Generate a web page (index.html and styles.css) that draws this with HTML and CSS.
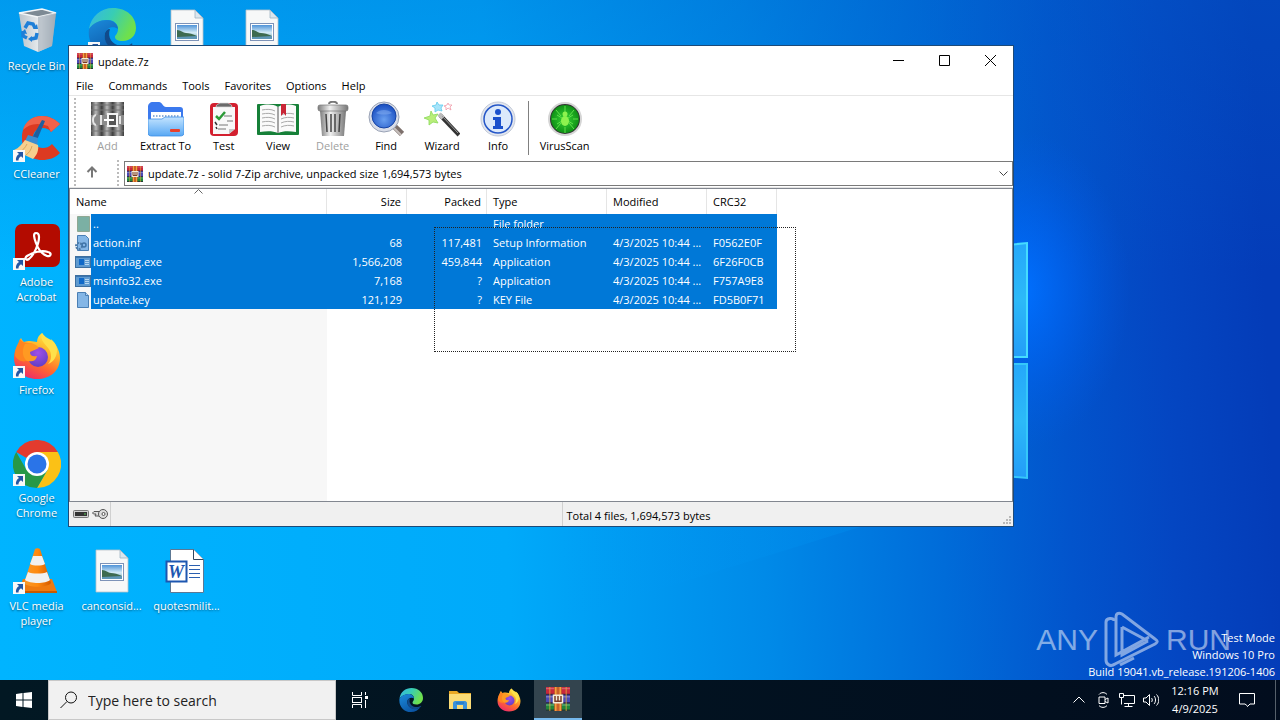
FILE: index.html
```html
<!DOCTYPE html>
<html lang="en">
<head>
    <meta charset="UTF-8">
    <meta name="viewport" content="width=device-width, initial-scale=1.0">
    <title>update.7z</title>
    <link rel="stylesheet" href="styles.css">
</head>
<body>
    <!-- Shared icons -->
    <svg class="sprite" aria-hidden="true">
        <defs>
            <linearGradient id="edgeTop" x1="0" y1="0" x2="1" y2="0.4">
                <stop offset="0" stop-color="#35b6e8"/><stop offset="0.5" stop-color="#38cdb4"/><stop offset="1" stop-color="#6fe04c"/>
            </linearGradient>
            <linearGradient id="edgeBottom" x1="0" y1="0" x2="0.6" y2="1">
                <stop offset="0" stop-color="#1b8bdc"/><stop offset="1" stop-color="#0b55a4"/>
            </linearGradient>
            <linearGradient id="foxBody" x1="0.8" y1="0" x2="0.3" y2="1">
                <stop offset="0" stop-color="#fff14a"/><stop offset="0.35" stop-color="#ffb52a"/><stop offset="0.65" stop-color="#ff6b2e"/><stop offset="1" stop-color="#ee2a6a"/>
            </linearGradient>
            <radialGradient id="foxGlobe" cx="0.5" cy="0.3" r="0.8">
                <stop offset="0" stop-color="#a050e8"/><stop offset="1" stop-color="#5a3cc0"/>
            </radialGradient>
            <linearGradient id="photoSky" x1="0" y1="0" x2="0" y2="1">
                <stop offset="0" stop-color="#4f93d8"/><stop offset="0.55" stop-color="#d5ecf6"/><stop offset="1" stop-color="#6fa6b8"/>
            </linearGradient>
            <linearGradient id="greyBook" x1="0" y1="0" x2="1" y2="0">
                <stop offset="0" stop-color="#444"/><stop offset="0.45" stop-color="#b8b8b8"/><stop offset="1" stop-color="#3a3a3a"/>
            </linearGradient>
            <linearGradient id="folderBlue" x1="0" y1="0" x2="0" y2="1">
                <stop offset="0" stop-color="#c4e4ff"/><stop offset="1" stop-color="#58a8f4"/>
            </linearGradient>
            <linearGradient id="binSide" x1="0" y1="0" x2="1" y2="0">
                <stop offset="0" stop-color="#b9c3cb"/><stop offset="0.6" stop-color="#eceff1"/><stop offset="1" stop-color="#8e9aa4"/>
            </linearGradient>
            <linearGradient id="steel" x1="0" y1="0" x2="1" y2="0">
                <stop offset="0" stop-color="#7d7d7d"/><stop offset="0.4" stop-color="#f0f0f0"/><stop offset="1" stop-color="#777"/>
            </linearGradient>
            <radialGradient id="lens" cx="0.5" cy="0.65" r="0.6">
                <stop offset="0" stop-color="#6aa0f0"/><stop offset="1" stop-color="#1d52c4"/>
            </radialGradient>
            <radialGradient id="radar" cx="0.5" cy="0.5" r="0.55">
                <stop offset="0" stop-color="#36d436"/><stop offset="1" stop-color="#0b8a12"/>
            </radialGradient>
            <linearGradient id="cone" x1="0" y1="0" x2="1" y2="0">
                <stop offset="0" stop-color="#f79a2c"/><stop offset="0.5" stop-color="#ff8a10"/><stop offset="1" stop-color="#d35a00"/>
            </linearGradient>
        </defs>

        <symbol id="shortcut" viewBox="0 0 12 12">
            <rect width="12" height="12" fill="#f8f8f8"/>
            <path d="M4 2h6v6L8 6.200C6 7.500 5.500 8.500 5.500 10.500H3C2.500 8 3.500 5.500 6 4z" fill="#2457a4"/>
        </symbol>

        <symbol id="edge" viewBox="0 0 48 48">
            <path d="M1 21C3 8 13 0 25 0c14 0 23 9 23 20 0 8-6 13-13 13-6 0-8-2-8-4 0-2 3-3 3-8 0-5-4-9-10-9C11 12 4 17 1 21z" fill="url(#edgeTop)"/>
            <path d="M1 21C5 15 12 12 19 12c6 0 11 4 11 9-4-3-11-2-13 4-2 7 3 14 10 16 6 2 12 0 16-3-4 6-11 10-19 10C9 48-1 36 1 21z" fill="url(#edgeBottom)"/>
            <path d="M17 25c-2 8 3 15 11 17 6 1 12-1 16-5 1-1 0-2-1-1-3 2-7 2-10 2-9-1-14-9-11-17-3 0-4 2-5 4z" fill="#114a8b"/>
        </symbol>

        <symbol id="firefox" viewBox="0 0 48 48">
            <path d="M29 1c2 4 5 6 9 10 1-2 0-3 0-4 5 5 9 12 9 19 0 13-10 21-23 21S1 38 1 26c0-6 2-11 5-15 0-2 1-4 2-5 1 2 2 3 3 4 2-1 4-1 6-1l7 1C24 6 26 3 29 1z" fill="url(#foxBody)"/>
            <path d="M7 7c2 3 5 4 9 4 3 0 6 2 8 5l-8 3c-1 3 2 6 6 6l-5 3c-5 1-9 4-15-4 0-7 2-10 5-17z" fill="#ff8420"/>
            <circle cx="25" cy="25" r="10" fill="url(#foxGlobe)"/>
            <path d="M12 12c6-2 11 0 14 4l-9 4c0 4 3 5 7 4-1 5-5 6-10 5-4-3-6-10-2-17z" fill="#ff9a22"/>
            <path d="M29 1c-3 8 5 12 8 18 2 5 1 10-2 13 6-2 9-8 9-14 0-4-3-9-6-10C34 6 31 4 29 1z" fill="#ffe04a"/>
        </symbol>

        <symbol id="rar" viewBox="0 0 16 16">
            <rect width="16" height="5" y="0" fill="#c8283c"/>
            <rect width="16" height="6" y="5" fill="#4a4ab4"/>
            <rect width="16" height="5" y="11" fill="#21863a"/>
            <path d="M0 1h16M0 6.500h16M0 12h16" stroke="#fff" stroke-opacity="0.25"/>
            <path d="M0 5h16M0 10.500h16M0 15.500h16" stroke="#2b1c35" stroke-opacity="0.7"/>
            <path d="M2.500 0v16M13.500 0v16" stroke="#e8b13a" stroke-opacity="0.5"/>
            <rect x="5.500" width="5" height="16" fill="#c8602a"/>
            <path d="M6.500 0v16M9.500 0v16" stroke="#f3a33c"/>
            <rect x="4.500" y="5" width="7" height="6" fill="#f4ecd8"/>
            <path d="M6 6v3.500h4V6M8 6v3" fill="none" stroke="#793b27"/>
        </symbol>

        <symbol id="photo" viewBox="0 0 48 48">
            <path d="M8 2h24l8 8v34H8z" fill="#f7f8f8" stroke="#b9c2c8" stroke-width="0.800"/>
            <path d="M32 2v8h8z" fill="#dbe6ee" stroke="#9fb3c2" stroke-width="0.800"/>
            <rect x="12.500" y="15.500" width="23" height="17" fill="#fff" stroke="#7d93b8"/>
            <rect x="14" y="17" width="20" height="14" fill="url(#photoSky)"/>
            <path d="M14 22c4 0 6 3 9 3s7 1 11 3v1H14z" fill="#3e6b50"/>
            <path d="M14 29l20-1v3H14z" fill="#5f97b6"/>
        </symbol>

        <symbol id="exe" viewBox="0 0 16 16">
            <rect x="0.500" y="2.500" width="15" height="11" fill="#5e9ad0" stroke="#3d6f9f"/>
            <path d="M1 3.500h14" stroke="#3a75b0"/>
            <rect x="4" y="5" width="5" height="6" fill="#1069c8"/>
            <path d="M10 6.500h4M10 8.500h4M10 10.500h4" stroke="#b5d7f2"/>
        </symbol>
    </svg>

    <main class="desktop">
        <!-- Wallpaper -->
        <svg class="wallpaper" viewBox="0 0 1280 680" preserveAspectRatio="none" aria-hidden="true">
            <defs>
                <linearGradient id="sky" x1="0" y1="680" x2="1280" y2="620" gradientUnits="userSpaceOnUse">
                    <stop offset="0" stop-color="#00b4ff"/><stop offset="0.4" stop-color="#00aafa"/>
                    <stop offset="0.6" stop-color="#008ae8"/><stop offset="0.74" stop-color="#006cd9"/>
                    <stop offset="0.84" stop-color="#0254cc"/><stop offset="0.92" stop-color="#0446c2"/>
                    <stop offset="1" stop-color="#043cb8"/>
                </linearGradient>
                <linearGradient id="topShade" x1="0" y1="0" x2="0" y2="1">
                    <stop offset="0" stop-color="#0060c8" stop-opacity="0.3"/><stop offset="0.4" stop-color="#0060c8" stop-opacity="0"/>
                </linearGradient>
                <radialGradient id="glow">
                    <stop offset="0" stop-color="#0070ff"/><stop offset="0.5" stop-color="#0066f8" stop-opacity="0.5"/><stop offset="1" stop-color="#005ce8" stop-opacity="0"/>
                </radialGradient>
                <linearGradient id="pane" x1="0" y1="0" x2="0" y2="1">
                    <stop offset="0" stop-color="#25a8fa"/><stop offset="0.5" stop-color="#2cb9f8"/><stop offset="1" stop-color="#239cf8"/>
                </linearGradient>
                <linearGradient id="beam" x1="0" y1="0" x2="1" y2="0">
                    <stop offset="0" stop-color="#0098f5" stop-opacity="0"/><stop offset="1" stop-color="#0098f5" stop-opacity="0.25"/>
                </linearGradient>
            </defs>
            <rect width="1280" height="680" fill="url(#sky)"/>
            <rect width="1280" height="680" fill="url(#topShade)"/>
            <path d="M560 620L860 527H560z" fill="url(#beam)"/>
            <ellipse cx="1020" cy="290" rx="110" ry="160" fill="url(#glow)"/>
            <path d="M900 256l127-13v114H900z" fill="url(#pane)" stroke="#45dcff" stroke-width="2"/>
            <path d="M900 364h127v114l-127-12z" fill="url(#pane)" stroke="#35c8fa" stroke-width="2"/>
        </svg>

        <!-- Desktop icons -->
        <div class="icon-row">
            <a class="desktop-icon" href="#recycle-bin">
                <svg viewBox="0 0 48 48">
                    <path d="M6 5l23-4 14 4-4 33-14 6-14-6z" fill="url(#binSide)"/>
                    <path d="M6 5l19 4 18-4-14-4z" fill="#7d8a94" stroke="#f3f6f8" stroke-width="1.500"/>
                    <path d="M25 9v35l14-6 4-33z" fill="#a9b4bd" opacity="0.7"/>
                    <path d="M12 20l3-5 5 1 2 4M24 25l-1 5-5 1M14 30l-4-2v-5" fill="none" stroke="#1e7fd8" stroke-width="3.500"/>
                    <path d="M20 21l5 0-1-5zM19 28v6l-4-3zM8 25l4-4 2 5z" fill="#1e7fd8"/>
                </svg>
                <span>Recycle Bin</span>
            </a>
            <a class="desktop-icon" href="#edge" aria-label="Edge">
                <svg viewBox="0 0 48 48">
                    <use href="#edge"/>
                    <use href="#shortcut" y="34" width="12" height="12"/>
                </svg>
            </a>
            <a class="desktop-icon" href="#picture-1" aria-label="Picture">
                <svg viewBox="0 0 48 48"><use href="#photo"/></svg>
            </a>
            <a class="desktop-icon" href="#picture-2" aria-label="Picture">
                <svg viewBox="0 0 48 48"><use href="#photo"/></svg>
            </a>
        </div>
        <div class="icon-row">
            <a class="desktop-icon" href="#ccleaner">
                <svg viewBox="0 0 48 48">
                    <path d="M47 8C42 3 36 0 29 0 17 0 9 9 9 22s8 22 20 22c7 0 13-2 18-7l-8-9c-3 3-6 4-9 4-6 0-10-4-10-10s4-10 10-10c3 0 6 1 8 4z" fill="#dc3a22"/>
                    <path d="M47 8C42 3 36 0 29 0 19 0 12 6 10 14c6-6 14-8 25-4l3 6z" fill="#f0624a"/>
                    <path d="M29 4l3 1-8 19-5-2z" fill="#1f5f9f"/>
                    <path d="M15 19l10 3-1 8-12-5z" fill="#3b8dd0"/>
                    <path d="M12 24l13 5c1 5-1 10-5 14L1 34c5-2 8-6 11-10z" fill="#f6cf8e"/>
                    <path d="M14 28c-2 4-4 6-7 8M19 30c-1 4-3 7-6 9" stroke="#dca65a" fill="none"/>
                    <use href="#shortcut" y="34" width="12" height="12"/>
                </svg>
                <span>CCleaner</span>
            </a>
        </div>
        <div class="icon-row">
            <a class="desktop-icon" href="#acrobat">
                <svg viewBox="0 0 48 48">
                    <rect x="2" y="0" width="45" height="43" rx="7" fill="#b30b00"/>
                    <path d="M23 9c-3 0-2 5 0 10 2 6 6 11 11 13 4 1 5-3 1-4-6-2-15 0-21 4-3 2-1 5 2 3 5-4 10-15 10-22 0-3-1-4-3-4z" fill="none" stroke="#fff" stroke-width="2.200"/>
                    <use href="#shortcut" y="34" width="12" height="12"/>
                </svg>
                <span>Adobe Acrobat</span>
            </a>
        </div>
        <div class="icon-row">
            <a class="desktop-icon" href="#firefox">
                <svg viewBox="0 0 48 48">
                    <use href="#firefox"/>
                    <use href="#shortcut" y="34" width="12" height="12"/>
                </svg>
                <span>Firefox</span>
            </a>
        </div>
        <div class="icon-row">
            <a class="desktop-icon" href="#chrome">
                <svg viewBox="0 0 48 48">
                    <path d="M24 24L3.200 12A24 24 0 0 1 44.800 12z" fill="#e33b2e"/>
                    <path d="M24 12h20.800A24 24 0 0 1 24 48l10.400-18z" fill="#fbc116"/>
                    <path d="M3.200 12l10.400 18L34.400 30 24 48A24 24 0 0 1 3.200 12z" fill="#279847"/>
                    <circle cx="24" cy="24" r="12" fill="#fff"/>
                    <circle cx="24" cy="24" r="9.500" fill="#2a74e8"/>
                    <use href="#shortcut" y="34" width="12" height="12"/>
                </svg>
                <span>Google Chrome</span>
            </a>
        </div>
        <div class="icon-row">
            <a class="desktop-icon" href="#vlc">
                <svg viewBox="0 0 48 48">
                    <path d="M10 31h29l5 13c0 1-1 1-2 1H7c-1 0-2 0-2-1z" fill="#ef7a10"/>
                    <path d="M5 43h39v2H5z" fill="#c95a00"/>
                    <path d="M22 1c1-1 4-1 5 0l11 34c-4 5-23 5-27 0z" fill="url(#cone)"/>
                    <path d="M20 8h9l3 8c-3 2-12 2-15 0zM15 24c4 2 15 2 19 0l3 8c-4 4-20 4-25 0z" fill="#f1f1f1"/>
                    <use href="#shortcut" y="34" width="12" height="12"/>
                </svg>
                <span>VLC media player</span>
            </a>
            <a class="desktop-icon" href="#canconsid">
                <svg viewBox="0 0 48 48"><use href="#photo"/></svg>
                <span>canconsid...</span>
            </a>
            <a class="desktop-icon" href="#quotesmilit">
                <svg viewBox="0 0 48 48">
                    <path d="M7.500 1.500h23l10 10v33h-33z" fill="#fff" stroke="#5c7894"/>
                    <path d="M30.500 1.500v10h10" fill="#fff" stroke="#33475e"/>
                    <path d="M26 17.500h11M26 21.500h11M26 25.500h11M26 29.500h11" stroke="#2a5fb0"/>
                    <rect x="3.500" y="13.500" width="20" height="20" fill="#fff" stroke="#1d56b0" stroke-width="2"/>
                    <text class="word-mark" x="13" y="30" text-anchor="middle">W</text>
                </svg>
                <span>quotesmilit...</span>
            </a>
        </div>

        <!-- Watermarks -->
        <div class="brand" aria-hidden="true">
            <span>ANY</span>
            <svg viewBox="0 0 56 60">
                <path d="M10 11c0-4-8-3-8 1v38c0 5 5 7 9 4l40-20c3-2 3-3 0-5L18 4c-4-2-6 0-6 3v38l33-18M18 17v28l26-14M18 17l26 14M16 55l14-7" fill="none" stroke="currentColor" stroke-width="3"/>
            </svg>
            <span>RUN</span>
        </div>
        <div class="build-info">
            <div>Test Mode</div>
            <div>Windows 10 Pro</div>
            <div>Build 19041.vb_release.191206-1406</div>
        </div>

        <!-- Archive window -->
        <section class="window">
            <header class="title-bar">
                <svg class="small-icon" viewBox="0 0 16 16"><use href="#rar"/></svg>
                <h1>update.7z</h1>
                <div class="window-buttons">
                    <button type="button" aria-label="Minimize"><svg viewBox="0 0 11 11"><path d="M0 5.500h11"/></svg></button>
                    <button type="button" aria-label="Maximize"><svg viewBox="0 0 11 11"><path d="M0.500 0.500h10v10h-10z"/></svg></button>
                    <button type="button" aria-label="Close"><svg viewBox="0 0 11 11"><path d="M0 0l11 11M11 0L0 11"/></svg></button>
                </div>
            </header>

            <nav class="menu-bar">
                <a href="#file">File</a>
                <a href="#commands">Commands</a>
                <a href="#tools">Tools</a>
                <a href="#favorites">Favorites</a>
                <a href="#options">Options</a>
                <a href="#help">Help</a>
            </nav>

            <div class="bars">
                <div class="toolbar">
                    <button type="button" disabled>
                        <svg viewBox="0 0 36 36">
                            <rect x="1" y="1" width="11" height="34" fill="url(#greyBook)"/>
                            <rect x="12" y="1" width="11" height="34" fill="url(#greyBook)"/>
                            <rect x="23" y="1" width="11" height="34" fill="url(#greyBook)"/>
                            <path d="M1 4h33M1 9h33M1 30h33" stroke="#777"/>
                            <rect x="1" y="14" width="33" height="10" fill="#8a8a8a"/>
                            <path d="M6 14c-4 1-4 9 0 10M11 14v10M30 15v8" stroke="#e4e4e4" stroke-width="2" fill="none"/>
                            <rect x="18" y="13" width="9" height="12" fill="#555" stroke="#f4f4f4" stroke-width="2"/>
                            <path d="M14 19h10" stroke="#fff" stroke-width="2"/>
                        </svg>
                        Add
                    </button>
                    <button type="button">
                        <svg viewBox="0 0 36 36">
                            <path d="M0 6c0-3 2-5 5-5h6c3 0 4 5 7 5h14c2 0 3 1 3 3v20H0z" fill="#3b79ee"/>
                            <path d="M3 11h30v12H3z" fill="#fff"/>
                            <path d="M5 15h26" stroke="#8fb0d8" stroke-width="2" stroke-dasharray="1.500 1.500"/>
                            <path d="M0 18h14l3-2h19v15c0 3-1 4-4 4H4c-3 0-4-1-4-4z" fill="url(#folderBlue)" stroke="#3d8fe6" stroke-width="0.800"/>
                            <rect x="22" y="28" width="10" height="3" rx="1" fill="#e8402c"/>
                        </svg>
                        Extract To
                    </button>
                    <button type="button">
                        <svg viewBox="0 0 36 36">
                            <rect x="4" y="2" width="28" height="33" rx="4" fill="#d3202f"/>
                            <path d="M7 6h22v22l-6 5H7z" fill="#f8f8f8"/>
                            <path d="M29 28l-6 5v-5z" fill="#c7c7c7"/>
                            <path d="M10 6c0-3 3-3 4-4h8c1 1 4 1 4 4z" fill="#6a6a6a" stroke="#ddd" stroke-width="0.700"/>
                            <path d="M10 15l3 3 6-7" fill="none" stroke="#2c9a38" stroke-width="2.500"/>
                            <path d="M18 15h8M21 20h6M13 24h9M12 28h8" stroke="#777"/>
                            <path d="M9 21l2 3M10 26l1 2" stroke="#333" stroke-width="1.500"/>
                        </svg>
                        Test
                    </button>
                    <button type="button">
                        <svg class="wide-icon" viewBox="0 0 44 36">
                            <rect x="1" y="3" width="42" height="31" rx="1" fill="#168038"/>
                            <path d="M4 5c6-2 13-2 18 1 5-3 12-3 18-1v26c-7-1-13-1-18 1-5-2-11-2-18-1z" fill="#fafafa"/>
                            <path d="M22 6v26" stroke="#888" stroke-width="1.500"/>
                            <path d="M6 9c5-1 9-1 13 1M6 13c5-1 9-1 13 1M6 17c5-1 9-1 13 1M6 21c5-1 9-1 13 1M6 25c5-1 9-1 13 1M25 14c4-2 9-2 13-1M25 18c4-2 9-2 13-1M25 22c4-2 9-2 13-1M25 26c4-2 9-2 13-1" fill="none" stroke="#aaa"/>
                            <path d="M25 3h5v12l-2.500-3L25 15z" fill="#c92636"/>
                        </svg>
                        View
                    </button>
                    <button type="button" disabled>
                        <svg viewBox="0 0 36 36">
                            <path d="M14 3c0-3 8-3 8 0" fill="none" stroke="#777" stroke-width="2"/>
                            <path d="M5 10h26l-2 25H7z" fill="url(#steel)"/>
                            <path d="M11 13l1 18M16 13v18M20 13v18M25 13l-1 18" stroke="#444" stroke-width="1.500"/>
                            <rect x="3" y="4" width="30" height="6" rx="2" fill="url(#steel)" stroke="#777" stroke-width="0.700"/>
                        </svg>
                        Delete
                    </button>
                    <button type="button" class="roomy">
                        <svg viewBox="0 0 36 36">
                            <path d="M26 25l8 8" stroke="#7d706c" stroke-width="6"/>
                            <path d="M25 26l8 8" stroke="#c7c0bd" stroke-width="2"/>
                            <circle cx="16" cy="16" r="15" fill="#d9dde8" stroke="#9aa3b6"/>
                            <circle cx="16" cy="15" r="12" fill="url(#lens)" stroke="#1744a4"/>
                            <path d="M8 12c4-4 12-4 16 0-4 2-12 2-16 0z" fill="#9cc0fa" opacity="0.4"/>
                        </svg>
                        Find
                    </button>
                    <button type="button" class="roomy">
                        <svg viewBox="0 0 36 36">
                            <path d="M16 14l19 20" stroke="#333" stroke-width="4"/>
                            <path d="M15 13l4 4" stroke="#bbb" stroke-width="4"/>
                            <path d="M18 15l16 17" stroke="#999"/>
                            <path d="M7 10l2 4 5-1-3 4 3 5-5-1-4 3v-5l-5-2 6-2z" fill="#b9ee7a" stroke="#8ad95a" stroke-width="0.800"/>
                            <path d="M13 1l2 3h4l-2 3 1 3-4-1-3 2v-4l-3-2 4-1z" fill="#a7e4fa" stroke="#5fcbee" stroke-width="0.800"/>
                            <path d="M24 2l1 2 3 0-2 2 1 3-3-2-2 2v-3l-2-1 3-1z" fill="#fff" stroke="#f09aa8" stroke-width="0.800"/>
                        </svg>
                        Wizard
                    </button>
                    <button type="button" class="roomy">
                        <svg viewBox="0 0 36 36">
                            <circle cx="18" cy="18" r="17" fill="#e3e7ef" stroke="#c3cad8"/>
                            <circle cx="18" cy="18" r="14" fill="#dce9fb" stroke="#2456c8" stroke-width="1.500"/>
                            <circle cx="18" cy="11" r="3" fill="#1b50cc"/>
                            <path d="M13 16h8v9h2v3H13v-3h2v-6h-2z" fill="#1b50cc"/>
                        </svg>
                        Info
                    </button>
                    <button type="button" class="scan">
                        <svg viewBox="0 0 36 36">
                            <circle cx="18" cy="18" r="16" fill="#333" stroke="#d5d5d5" stroke-width="2"/>
                            <circle cx="18" cy="18" r="14" fill="url(#radar)"/>
                            <path d="M18 5v6M18 26v6M5 18h5M26 18h5M9 9l5 6M27 9l-5 6M9 28l5-6M27 28l-5-6M10 14l5 3M26 14l-5 3M10 23l5-3M26 23l-5-3" stroke="#5fe04a"/>
                            <ellipse cx="18" cy="20" rx="4" ry="5" fill="#8df24e"/>
                            <circle cx="18" cy="13" r="2.500" fill="#8df24e"/>
                        </svg>
                        VirusScan
                    </button>
                </div>
                <div class="address-bar">
                    <button type="button" class="up-button" aria-label="Up one level">
                        <svg viewBox="0 0 12 12"><path d="M6 11.500V2M1.500 6L6 1.500 10.500 6"/></svg>
                    </button>
                    <div class="address">
                        <svg class="small-icon" viewBox="0 0 16 16"><use href="#rar"/></svg>
                        <select aria-label="Archive path">
                            <option>update.7z - solid 7-Zip archive, unpacked size 1,694,573 bytes</option>
                        </select>
                        <svg class="chevron" viewBox="0 0 9 6"><path d="M0.500 0.500l4 4 4-4"/></svg>
                    </div>
                </div>
            </div>

            <div class="file-list">
                <table>
                    <colgroup>
                        <col class="col-name">
                        <col class="col-size">
                        <col class="col-size">
                        <col class="col-type">
                        <col class="col-date">
                        <col class="col-crc">
                    </colgroup>
                    <thead>
                        <tr>
                            <th>Name <svg class="sort-mark" viewBox="0 0 9 6"><path d="M0.500 4.500l4-4 4 4"/></svg></th>
                            <th class="number">Size</th>
                            <th class="number">Packed</th>
                            <th>Type</th>
                            <th>Modified</th>
                            <th>CRC32</th>
                        </tr>
                    </thead>
                    <tbody>
                        <tr>
                            <td class="name"><div>
                                <svg viewBox="0 0 16 16"><path d="M2.500 0.500h12v15h-12z" fill="#7bb0a4" stroke="#8fa892"/></svg>
                                <span>..</span>
                            </div></td>
                            <td class="number"></td>
                            <td class="number"></td>
                            <td>File folder</td>
                            <td></td>
                            <td></td>
                        </tr>
                        <tr>
                            <td class="name"><div>
                                <svg viewBox="0 0 16 16">
                                    <path d="M2.500 0.500h8l3 3v12h-11z" fill="#84b6e6" stroke="#4a7fb4"/>
                                    <circle cx="4" cy="11" r="3" fill="none" stroke="#4e7ca8" stroke-width="2" stroke-dasharray="2 1"/>
                                    <circle cx="9" cy="10" r="2" fill="none" stroke="#3f74a8" stroke-width="1.500"/>
                                </svg>
                                <span>action.inf</span>
                            </div></td>
                            <td class="number">68</td>
                            <td class="number">117,481</td>
                            <td>Setup Information</td>
                            <td>4/3/2025 10:44 ...</td>
                            <td>F0562E0F</td>
                        </tr>
                        <tr>
                            <td class="name"><div>
                                <svg viewBox="0 0 16 16"><use href="#exe"/></svg>
                                <span>lumpdiag.exe</span>
                            </div></td>
                            <td class="number">1,566,208</td>
                            <td class="number">459,844</td>
                            <td>Application</td>
                            <td>4/3/2025 10:44 ...</td>
                            <td>6F26F0CB</td>
                        </tr>
                        <tr>
                            <td class="name"><div>
                                <svg viewBox="0 0 16 16"><use href="#exe"/></svg>
                                <span>msinfo32.exe</span>
                            </div></td>
                            <td class="number">7,168</td>
                            <td class="number">?</td>
                            <td>Application</td>
                            <td>4/3/2025 10:44 ...</td>
                            <td>F757A9E8</td>
                        </tr>
                        <tr>
                            <td class="name"><div>
                                <svg viewBox="0 0 16 16">
                                    <path d="M2.500 0.500h8l3 3v12h-11z" fill="#84b6e6" stroke="#4a7fb4"/>
                                    <path d="M10.500 0.500v3h3" fill="#b6d6f2" stroke="#4a7fb4"/>
                                </svg>
                                <span>update.key</span>
                            </div></td>
                            <td class="number">121,129</td>
                            <td class="number">?</td>
                            <td>KEY File</td>
                            <td>4/3/2025 10:44 ...</td>
                            <td>FD5B0F71</td>
                        </tr>
                    </tbody>
                </table>
                <div class="marquee"></div>
            </div>

            <footer class="status-bar">
                <div class="status-icons">
                    <svg viewBox="0 0 16 12">
                        <rect x="0.500" y="2.500" width="15" height="7" rx="1" fill="#d0d0d0" stroke="#777"/>
                        <rect x="2" y="4" width="12" height="4" fill="#333"/>
                        <path d="M11 6h2" stroke="#5ac85a"/>
                    </svg>
                    <svg viewBox="0 0 16 12">
                        <path d="M8 3.500H2L0.500 5l1 1H4l-1 2h5" fill="#ddd" stroke="#555"/>
                        <circle cx="11" cy="6" r="4.500" fill="#ddd" stroke="#555"/>
                        <circle cx="11.500" cy="6" r="1.500" fill="#fff" stroke="#555"/>
                    </svg>
                </div>
                <div class="status-text"></div>
                <div class="status-text">Total 4 files, 1,694,573 bytes</div>
                <svg class="resize-grip" viewBox="0 0 10 10">
                    <path d="M7 0h2v2H7zM7 3h2v2H7zM4 3h2v2H4zM7 6h2v2H7zM4 6h2v2H4zM1 6h2v2H1z" fill="#b8b8b8"/>
                </svg>
            </footer>
        </section>
    </main>

    <!-- Taskbar -->
    <footer class="taskbar">
        <button type="button" class="task-button" aria-label="Start">
            <svg viewBox="0 0 16 16" width="16" height="16"><path d="M0 2l6.500-1v6.500H0zM7.500 1L16 0v7.500H7.500zM0 8.500h6.500V15L0 14zM7.500 8.500H16V16l-8.500-1z" fill="#fff"/></svg>
        </button>
        <label class="search">
            <svg viewBox="0 0 18 18"><circle cx="11" cy="6.500" r="5.500"/><path d="M7 10.500l-6.500 6.500"/></svg>
            <input type="search" placeholder="Type here to search" aria-label="Search">
        </label>
        <button type="button" class="task-button" aria-label="Task view">
            <svg viewBox="0 0 18 16" width="18" height="16" fill="none" stroke="#fff"><path d="M1.500 0v3.500h9V0M1.500 16v-3.500h9V16M1.500 5v6M10.500 5v6M1.500 5.500h9M1.500 10.500h9M14.500 0v3M14.500 8v8"/><path d="M14 4h3v3h-3z" fill="#fff" stroke="none"/></svg>
        </button>
        <div class="pinned">
            <button type="button" class="task-button" aria-label="Edge"><svg viewBox="0 0 48 48" width="24" height="24"><use href="#edge"/></svg></button>
            <button type="button" class="task-button" aria-label="File Explorer">
                <svg viewBox="0 0 24 24" width="24" height="24">
                    <path d="M1 3h8l2 2h12v3H1z" fill="#e9a824"/>
                    <path d="M1 6h22v15H1z" fill="#fbdc76"/>
                    <path d="M5 21v-6c0-1 1-2 2-2h10c1 0 2 1 2 2v6h-4v-4H9v4z" fill="#3b92dc"/>
                    <path d="M8 15h8" stroke="#1c6cb8"/>
                </svg>
            </button>
            <button type="button" class="task-button" aria-label="Firefox"><svg viewBox="0 0 48 48" width="24" height="24"><use href="#firefox"/></svg></button>
            <button type="button" class="task-button active" aria-label="Archive"><svg viewBox="0 0 16 16" width="24" height="24"><use href="#rar"/></svg></button>
        </div>
        <div class="tray">
            <button type="button" aria-label="Show hidden icons"><svg viewBox="0 0 16 16"><path d="M2.500 10.500L8 5l5.500 5.500"/></svg></button>
            <button type="button" aria-label="Meet now"><svg viewBox="0 0 16 16"><path d="M4 5h6v6.500H4zM10 7.500l3-1.500v5l-3-1.500M4 2.500C6 0 10 0 12 2.500M4 13.500c2 2.500 6 2.500 8 0"/></svg></button>
            <button type="button" aria-label="Network"><svg viewBox="0 0 16 16"><path d="M4 3.500h11.500v8H5M0.500 1.500h4v4h-4zM2.500 5.500v7M9.500 12v2.500M5.500 14.500h8"/></svg></button>
            <button type="button" aria-label="Volume"><svg viewBox="0 0 16 16"><path d="M0.500 6H3l3.500-3.500v11L3 10H0.500zM8.500 6c1 1 1 3 0 4M11 4c2 2 2 6 0 8M13.500 2.500c3 3 3 8 0 11"/></svg></button>
            <div class="clock">
                <time datetime="12:16">12:16 PM</time>
                <time datetime="2025-04-09">4/9/2025</time>
            </div>
            <button type="button" class="notify" aria-label="Notifications"><svg viewBox="0 0 16 16"><path d="M0.500 1.500h15v10.500H11L8.500 14.500V14L6 12H0.500z"/></svg></button>
            <button type="button" class="show-desktop" aria-label="Show desktop"></button>
        </div>
    </footer>
</body>
</html>
```
FILE: styles.css
```css
* {
    box-sizing: border-box;
}

body {
    margin: 0;
    height: 100vh;
    display: flex;
    flex-direction: column;
    overflow: hidden;
    font-family: "Open Sans", "Noto Sans", sans-serif;
    font-size: 11px;
    line-height: 15px;
    color: #000;
}

button {
    font: inherit;
    color: inherit;
    background: none;
    border: none;
    padding: 0;
}

a {
    color: inherit;
    text-decoration: none;
}

.sprite {
    position: absolute;
    width: 0;
    height: 0;
}

/* Desktop */
.desktop {
    position: relative;
    flex: 1;
    min-height: 0;
    overflow: hidden;
}

.wallpaper {
    position: absolute;
    width: 100%;
    height: 100%;
}

.icon-row {
    position: relative;
    display: flex;
    height: 108px;
}

.desktop-icon {
    display: flex;
    flex-direction: column;
    align-items: center;
    gap: 2px;
    width: 75px;
    padding: 8px 2px 0 0;
    color: #fff;
    text-align: center;
    text-shadow: 0 1px 2px rgba(0, 0, 0, 0.5);
}

.desktop-icon svg {
    width: 48px;
    height: 48px;
    flex-shrink: 0;
}

.word-mark {
    font-family: "Liberation Serif", serif;
    font-size: 18px;
    font-style: italic;
    font-weight: bold;
    fill: #1d56b0;
    text-shadow: none;
}

/* Watermarks */
.brand {
    position: absolute;
    right: 49px;
    bottom: 10px;
    display: flex;
    align-items: center;
    gap: 6px;
    color: #fff;
    opacity: 0.5;
    font-family: "Liberation Sans Narrow", "Liberation Sans", sans-serif;
    font-size: 30px;
    line-height: 60px;
}

.brand svg {
    width: 56px;
    height: 60px;
}

.build-info {
    position: absolute;
    right: 5px;
    bottom: 0;
    color: #fff;
    text-align: right;
    line-height: 17px;
}

/* Window */
.window {
    position: absolute;
    top: 45px;
    left: 68px;
    width: 946px;
    height: 482px;
    display: flex;
    flex-direction: column;
    background-color: #fff;
    border: 1px solid #1d4a78;
}

.small-icon {
    width: 16px;
    height: 16px;
    flex-shrink: 0;
}

.title-bar {
    display: flex;
    align-items: center;
    gap: 5px;
    height: 30px;
    padding-left: 8px;
}

.title-bar h1 {
    flex: 1;
    margin: 0;
    font-size: 11px;
    font-weight: normal;
}

.window-buttons {
    display: flex;
}

.window-buttons button {
    width: 46px;
    height: 29px;
}

.window-buttons svg {
    width: 11px;
    height: 11px;
    fill: none;
    stroke: #000;
}

.menu-bar {
    display: flex;
    gap: 15px;
    height: 20px;
    padding: 2px 7px;
    border-bottom: 1px solid #e6e6e6;
}

.bars {
    height: 92px;
    padding: 2px 0 2px 5px;
    border-bottom: 1px solid #e3e3e3;
}

.toolbar {
    display: flex;
    height: 62px;
    padding: 3px 0 0 6px;
    border-left: 2px dotted #bbb;
}

.toolbar button {
    display: flex;
    flex-direction: column;
    align-items: center;
    gap: 1px;
    min-width: 51px;
    height: 54px;
    padding: 0 7px;
}

.toolbar button:disabled {
    color: #a0a0a0;
}

.toolbar svg {
    width: 36px;
    height: 36px;
}

.toolbar .wide-icon {
    width: 44px;
}

.toolbar .roomy {
    min-width: 56px;
}

.toolbar .scan {
    margin-left: 2px;
    min-width: 72px;
    border-left: 1px solid #808080;
}

.address-bar {
    display: flex;
    height: 26px;
    border-left: 2px dotted #bbb;
}

.address-bar .up-button {
    width: 43px;
    padding-right: 10px;
    border-right: 2px dotted #bbb;
}

.up-button svg {
    width: 12px;
    height: 12px;
    fill: none;
    stroke: #777;
    stroke-width: 2;
}

.address {
    display: flex;
    flex: 1;
    align-items: center;
    gap: 1px;
    margin: 1px 0 0 5px;
    padding: 0 4px 0 2px;
    border: 1px solid #7a7a7a;
}

.address select {
    flex: 1;
    appearance: none;
    border: none;
    background: none;
    padding: 0 4px;
    font: inherit;
    color: inherit;
}

.chevron {
    width: 9px;
    height: 6px;
    fill: none;
    stroke: #444;
}

/* File list */
.file-list {
    position: relative;
    flex: 1;
    border: 1px solid #828790;
    background: linear-gradient(to right, #f7f7f7 257px, #fff 257px);
}

table {
    table-layout: fixed;
    width: 707px;
    border-spacing: 0;
}

.col-name {
    width: 257px;
}

.col-size {
    width: 80px;
}

.col-type {
    width: 120px;
}

.col-date {
    width: 100px;
}

.col-crc {
    width: 70px;
}

thead {
    background-color: #fff;
}

th {
    position: relative;
    height: 25px;
    padding: 0 5px 0 6px;
    border-right: 1px solid #e5e5e5;
    font-weight: normal;
    text-align: left;
}

.sort-mark {
    position: absolute;
    top: 0;
    left: calc(50% - 4px);
    width: 9px;
    height: 6px;
    fill: none;
    stroke: #666;
}

td {
    height: 19px;
    padding: 0 5px 0 6px;
    background-color: #0078d7;
    color: #fff;
    white-space: nowrap;
}

.number {
    text-align: right;
}

td.name {
    padding: 0;
    background: none;
}

.name div {
    display: flex;
    align-items: center;
}

.name svg {
    width: 16px;
    height: 16px;
    margin-left: 5px;
}

.name span {
    flex: 1;
    padding-left: 2px;
    line-height: 19px;
    background-color: #0078d7;
}

.marquee {
    position: absolute;
    top: 38px;
    left: 364px;
    width: 362px;
    height: 125px;
    border: 1px dotted #222;
}

/* Status bar */
.status-bar {
    display: flex;
    height: 24px;
    background-color: #f0f0f0;
}

.status-icons {
    display: flex;
    gap: 3px;
    width: 42px;
    padding: 6px 0 0 4px;
    border-right: 1px solid #d0d0d0;
}

.status-icons svg {
    width: 16px;
    height: 12px;
}

.status-text {
    flex: 1;
    padding: 6px 4px 0;
}

.status-text + .status-text {
    border-left: 1px solid #d0d0d0;
}

.resize-grip {
    position: absolute;
    right: 1px;
    bottom: 0;
    width: 10px;
    height: 10px;
}

/* Taskbar */
.taskbar {
    display: flex;
    height: 40px;
    background: linear-gradient(to right, #021823, #020d1e);
}

.task-button {
    display: flex;
    align-items: center;
    justify-content: center;
    width: 48px;
    height: 40px;
}

.task-button.active {
    background-color: #33444e;
    border-bottom: 2px solid #76b9ed;
}

.search {
    display: flex;
    align-items: center;
    gap: 10px;
    width: 288px;
    padding: 0 11px;
    background-color: #f1f1f1;
    border: 1px solid #c8c8c8;
}

.search svg {
    width: 18px;
    height: 18px;
    fill: none;
    stroke: #111;
}

.search input {
    flex: 1;
    min-width: 0;
    padding: 0;
    border: none;
    background: none;
    font-family: inherit;
    font-size: 14px;
}

.search input::placeholder {
    color: #222;
}

.pinned {
    display: flex;
    gap: 1px;
    margin-left: 3px;
}

.tray {
    display: flex;
    margin-left: auto;
    color: #fff;
}

.tray button {
    display: flex;
    align-items: center;
    justify-content: center;
    width: 24px;
}

.tray svg {
    width: 16px;
    height: 16px;
    fill: none;
    stroke: #fff;
}

.clock {
    display: flex;
    flex-direction: column;
    width: 64px;
    padding-top: 2px;
    line-height: 18px;
    text-align: center;
}

.tray .notify {
    width: 40px;
}

.tray .show-desktop {
    width: 5px;
    margin-left: 8px;
    border-left: 1px solid #56606b;
}
```
